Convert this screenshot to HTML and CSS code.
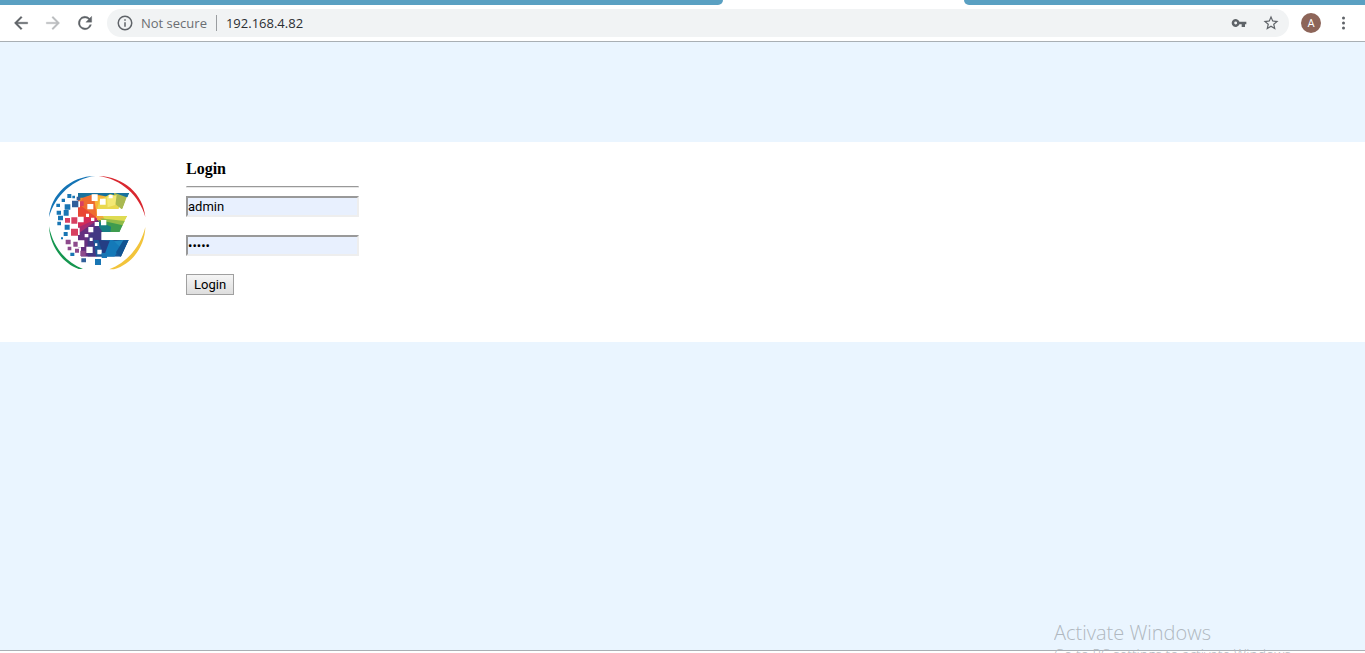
FILE: index.html
```html
<!DOCTYPE html>
<html lang="en">
<head>
<meta charset="utf-8">
<meta name="viewport" content="width=device-width, initial-scale=1">
<title>Login</title>
<link rel="stylesheet" href="styles.css">
</head>
<body>
<header class="browser">
  <div class="tabs"><span class="tab-rest tab-left"></span><span class="tab-active"></span><span class="tab-rest tab-right"></span></div>
  <div class="toolbar">
    <nav class="nav">
      <button class="icon" type="button" aria-label="Back"><svg viewBox="0 0 24 24" width="20" height="20"><path fill="#5f6368" stroke="#5f6368" stroke-width=".4" d="M20 11H7.800l5.600-5.600L12 4l-8 8 8 8 1.400-1.400L7.800 13H20z"/></svg></button>
      <button class="icon" type="button" aria-label="Forward"><svg viewBox="0 0 24 24" width="20" height="20"><path fill="#babcbe" stroke="#babcbe" stroke-width=".4" d="M12 4l-1.400 1.400 5.600 5.600H4v2h12.200l-5.600 5.600L12 20l8-8z"/></svg></button>
      <button class="icon" type="button" aria-label="Reload"><svg viewBox="0 0 24 24" width="20" height="20"><path fill="#5f6368" stroke="#5f6368" stroke-width=".4" d="M17.650 6.350A8 8 0 1 0 19.730 14h-2.080A6 6 0 1 1 12 6c1.660 0 3.140.69 4.220 1.780L13 11h7V4z"/></svg></button>
    </nav>
    <div class="address">
      <svg viewBox="0 0 24 24" width="18" height="18" aria-hidden="true"><path fill="#5f6368" d="M11 17h2v-6h-2zm0-8h2V7h-2zm1-7a10 10 0 1 0 0 20 10 10 0 0 0 0-20zm0 18a8 8 0 1 1 0-16 8 8 0 0 1 0 16z"/></svg>
      <span class="insecure">Not secure</span>
      <input class="url" type="text" aria-label="Address" value="192.168.4.82">
      <button class="icon" type="button" aria-label="Passwords"><svg viewBox="0 0 24 24" width="16" height="16"><path fill="#5f6368" d="M12.650 10A6 6 0 1 0 12.650 14H16v4h5v-4h2v-4zM7 14.200a2.200 2.200 0 1 1 0-4.400 2.200 2.200 0 0 1 0 4.400z"/></svg></button>
      <button class="icon" type="button" aria-label="Bookmark"><svg viewBox="0 0 24 24" width="18" height="18"><path fill="#5f6368" d="M22 9.240l-7.190-.62L12 2 9.190 8.630 2 9.240l5.460 4.730L5.820 21 12 17.270 18.180 21l-1.630-7.030zM12 15.400l-3.760 2.270 1-4.280-3.320-2.880 4.380-.38L12 6.100l1.710 4.040 4.380.38-3.320 2.880 1 4.280z"/></svg></button>
    </div>
    <button class="avatar" type="button" aria-label="Profile">A</button>
    <button class="icon" type="button" aria-label="Menu"><svg viewBox="0 0 20 20" width="20" height="20"><g fill="#5f6368"><circle cx="10.500" cy="5" r="1.500"/><circle cx="10.500" cy="10" r="1.500"/><circle cx="10.500" cy="15" r="1.500"/></g></svg></button>
  </div>
</header>
<main class="page">
  <section class="panel">
    <svg class="logo" viewBox="0 0 336 315" role="img" aria-label="E logo">
      <defs><clipPath id="e"><path d="M114 69H268L247 117H170V138H262L239 186H184V210H266L243 260H114z"/></clipPath></defs>
      <path fill="#1474b5" d="M27 142C32 75 90 18 166 18C101 25 45 76 27 142z"/>
      <path fill="#d9272f" d="M176 18C250 20 310 72 316 141C299 78 244 27 176 18z"/>
      <path fill="#15964f" d="M27 169C29 228 68 280 116 297H129C78 277 39 232 27 169z"/>
      <path fill="#f2c43b" d="M316 171C315 231 274 283 222 298H208C260 278 301 232 316 171z"/>
      <g clip-path="url(#e)">
        <path fill="#e94734" d="M110 65H180V165H110z"/>
        <path fill="#f58a2c" d="M130 65H200L172 144L110 85z"/>
        <path fill="#ee6c30" d="M130 82L162 75L172 145L117 103z"/>
        <path fill="#f8b637" d="M162 80L205 72L215 118L171 140z"/>
        <path fill="#17719d" d="M110 65H270L263 82H210L162 72L128 83H110z"/>
        <path fill="#e9d84f" d="M178 92L210 72L246 82L235 120H171z"/>
        <path fill="#a9b951" d="M222 68L260 82L247 119L226 103z"/>
        <path fill="#f3e875" d="M201 82L230 75L226 105L203 112z"/>
        <path fill="#f3a93c" d="M168 137H192L206 163L171 151z"/>
        <path fill="#dedb52" d="M188 137H263L252 156L199 158z"/>
        <path fill="#91bc49" d="M180 145L255 153L246 170L202 164z"/>
        <path fill="#3f9c4e" d="M174 149L248 166L239 187H209z"/>
        <path fill="#167e83" d="M172 152L213 170L211 187H181z"/>
        <path fill="#d32b59" d="M110 140L172 145L145 180H110z"/>
        <path fill="#a62b70" d="M110 174L171 146L154 205L110 221z"/>
        <path fill="#643080" d="M110 194L174 149L184 214L169 262H110z"/>
        <path fill="#433884" d="M143 204L171 161L189 188V260H143z"/>
        <path fill="#1b5998" d="M160 210H270L242 263H169z"/>
        <path fill="#243e84" d="M175 209L227 217L192 263z"/>
        <path fill="#1479b8" d="M211 208L245 222L222 263H190z"/>
        <path fill="#1d86bf" d="M222 214L268 208L251 241z"/>
        <path fill="#125492" d="M250 211L266 210L243 263L228 247z"/>
      </g>
      <g fill="#fff"><path d="M112 94H120V112H112zM155 73H173V93H155zM180 86H197V104H180zM206 75H218V85H206zM142 102H160V118H142zM138 131H147V141H138zM153 143H163V153H153zM164 156H177V168H164zM183 150H199V166H183zM145 171H160V187H145zM112 140H131V157H112zM112 173H119V195H112zM134 192H145V202H134zM149 203H158V213H149zM114 211H133V231H114zM139 230H158V249H139zM165 220H172V228H165zM172 239H185V253H172zM112 232H123V262H112z"/></g>
      <path fill="#1976b4" d="M82 72H94V84H82zM65 86H75V96H65zM97 77H105V85H97zM49 101H60V111H49zM74 103H91V119H74zM50 122H63V134H50zM71 120H86V137H71zM54 137H69V151H54zM52 155H63V166H52zM74 164H89V179H74zM71 186H83V198H71zM63 202H69V208H63zM91 248H103V258H91zM165 267H183V285H165zM185 249H201V264H185z"/>
      <path fill="#315f9a" d="M96 92H115V112H96zM124 265H138V277H124zM110 80H121V91H110z"/>
      <path fill="#d84061" d="M94 142H112V161H94zM75 144H90V158H75zM93 176H114V197H93zM120 94H131V108H120z"/>
      <path fill="#8d4a8c" d="M77 209H92V223H77zM100 215H113V230H100zM83 230H94V241H83zM121 242H137V258H121zM105 236H117V248H105z"/>
    </svg>
    <form class="login" onsubmit="return false">
      <h1>Login</h1>
      <hr>
      <input class="field" type="text" aria-label="Username" value="admin">
      <input class="field" type="password" aria-label="Password" value="admin">
      <button class="submit" type="submit">Login</button>
    </form>
  </section>
</main>
<footer class="edge"></footer>
<aside class="watermark"><p class="title">Activate Windows</p><p class="note">Go to PC settings to activate Windows.</p></aside>
</body>
</html>
```
FILE: styles.css
```css
* { box-sizing: border-box; }
body {
  position: relative;
  display: flex;
  flex-direction: column;
  height: 100vh;
  margin: 0;
  overflow: hidden;
  background: #eaf5ff;
}
button, input { font: inherit; }
svg { display: block; }
.browser {
  background: #fff;
  border-bottom: 1px solid #a9afb4;
  font-family: "Open Sans", "Noto Sans", sans-serif;
  font-size: 13px;
}
.tabs { display: flex; height: 5px; }
.tab-rest { background: #5aa0c2; }
.tab-left { flex: 723; border-bottom-right-radius: 6px; }
.tab-active { flex: 241; }
.tab-right { flex: 401; border-bottom-left-radius: 6px; }
.toolbar {
  display: flex;
  align-items: center;
  height: 36px;
  gap: 12px;
  padding: 0 12px 0 11px;
}
.nav { display: flex; gap: 12px; }
.icon { padding: 0; border: 0; background: none; }
.address {
  display: flex;
  align-items: center;
  flex: 1;
  height: 28px;
  padding: 0 9px;
  border-radius: 14px;
  background: #f1f3f4;
}
.address .icon + .icon { margin-left: 15px; }
.insecure {
  margin-left: 7px;
  padding-right: 9px;
  border-right: 1px solid #9a9da0;
  line-height: 16px;
  color: #6b6e72;
}
.url {
  flex: 1;
  min-width: 0;
  padding: 0 0 0 9px;
  border: 0;
  background: none;
  color: #2b2e32;
}
.avatar {
  width: 20px;
  height: 20px;
  padding: 0;
  border: 0;
  border-radius: 50%;
  background: #8d6559;
  color: #fff;
  font-family: Roboto, sans-serif;
  font-size: 11px;
}
.page { flex: 1; padding-top: 100px; }
.panel {
  display: flex;
  align-items: flex-start;
  gap: 34px;
  min-height: 200px;
  padding: 18px 40px;
  background: #fff;
}
.logo { width: 112px; height: 105px; margin-top: 10px; }
.login {
  display: flex;
  flex-direction: column;
  width: 173px;
  font-family: Roboto, "Liberation Sans", sans-serif;
  font-size: 13px;
}
.login h1 {
  margin: 0;
  font: bold 16px/18px "Liberation Serif", serif;
}
.login hr {
  width: 100%;
  height: 2px;
  margin: 8px 0;
  border: 1px solid #e6e6e6;
  border-top-color: #999;
}
.field {
  width: 100%;
  height: 21px;
  margin: 0 0 18px;
  padding: 1px 0;
  border: 2px solid #eee;
  border-color: #999 #eee #eee #999;
  background: #e8f0fe;
  color: #000;
}
.submit {
  align-self: flex-start;
  height: 21px;
  padding: 0 7px;
  border: 1px solid #a0a0a0;
  background: linear-gradient(#f5f5f5, #dedede);
  color: #000;
}
.edge { height: 3px; border-top: 1px solid #a9afb4; background: #fff; }
.watermark {
  position: absolute;
  top: 620px;
  right: 71px;
  width: 240px;
  height: 33px;
  overflow: hidden;
  color: #b0b8c0;
  font-family: "Open Sans", "Noto Sans", sans-serif;
  white-space: nowrap;
}
.watermark p { margin: 0; }
.title { font-size: 20px; font-weight: 300; line-height: 26px; }
.note { font-size: 14px; font-weight: 300; line-height: 18px; }
```
